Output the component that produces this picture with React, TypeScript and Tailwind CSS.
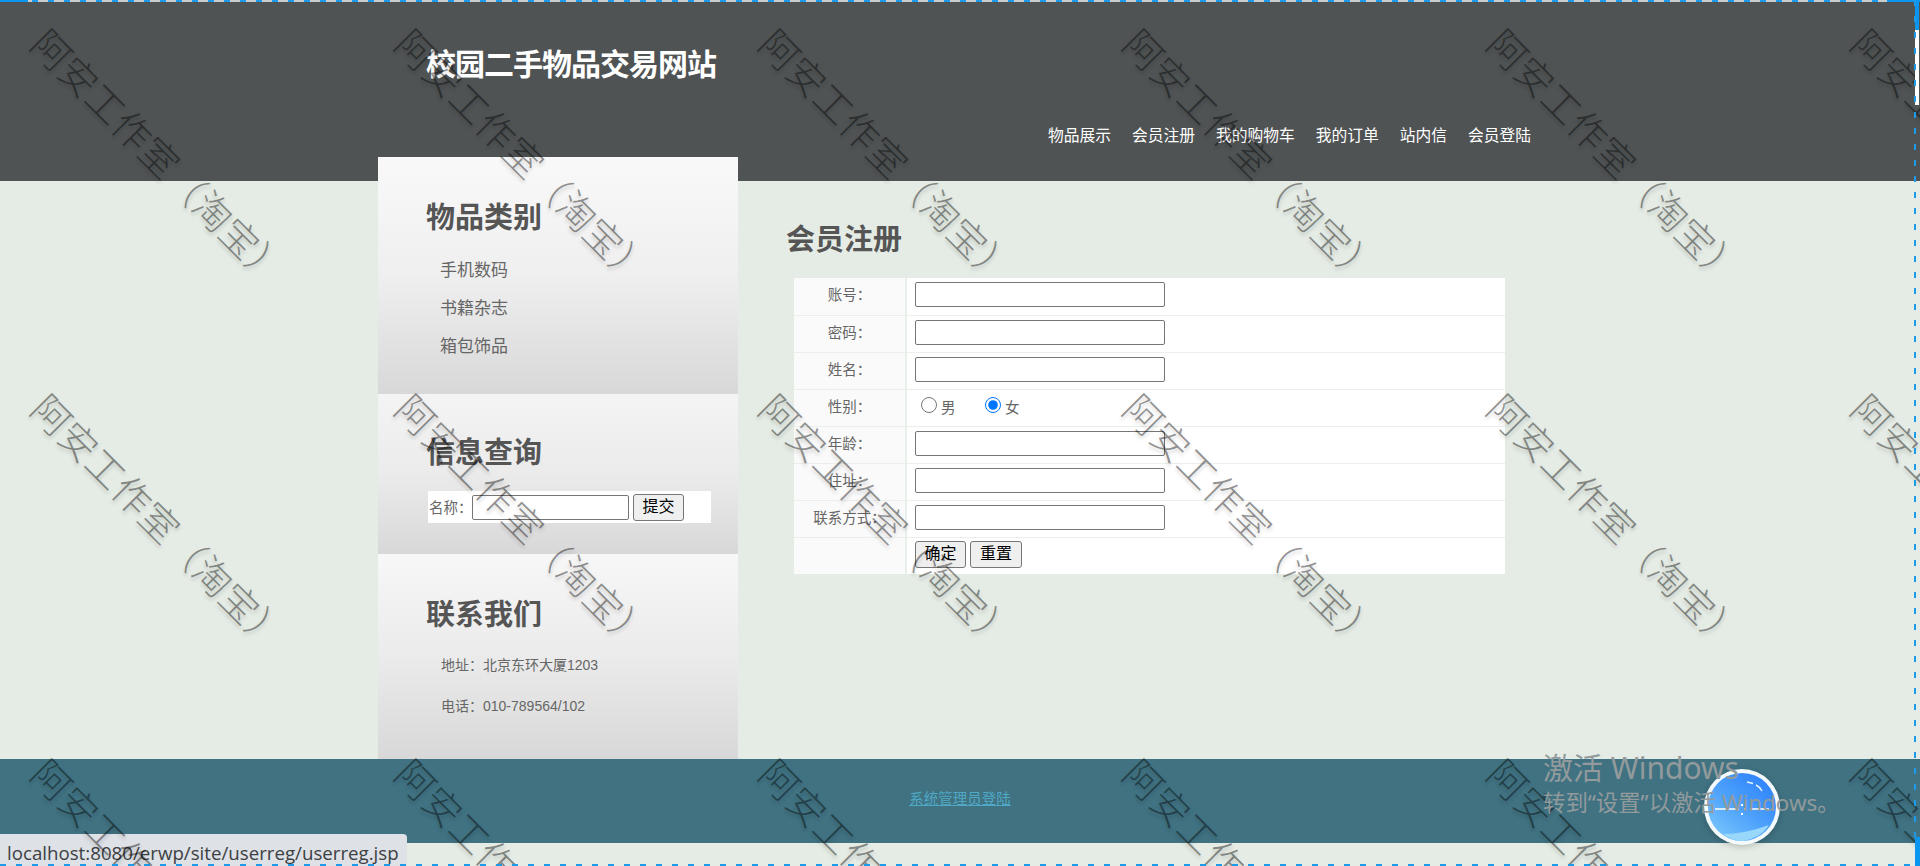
const cn = '"Liberation Sans", "Noto Sans CJK SC", sans-serif';

const navItems = ["物品展示", "会员注册", "我的购物车", "我的订单", "站内信", "会员登陆"];

const formRows = ["账号：", "密码：", "姓名：", "性别：", "年龄：", "住址：", "联系方式：", ""];

const marks = Array.from({ length: 18 }, (_, i) => i);

function TextInput({ className }: { className: string }) {
  return <input type="text" className={`h-[25px] border border-[#767676] rounded-[2px] bg-white ${className}`} />;
}

function NativeButton({ label, className }: { label: string; className: string }) {
  return (
    <button type="button" className={`h-[27px] border border-[#767676] rounded-[3px] bg-[#efefef] text-base leading-none text-black ${className}`}>
      {label}
    </button>
  );
}

function Ball() {
  return (
    <svg width="78" height="78" viewBox="0 0 78 78" className="absolute left-[1703px] top-[768px] drop-shadow-[0_2px_3px_rgba(0,0,0,0.2)]">
      <defs>
        <linearGradient id="ball" x1="0.85" y1="0.1" x2="0.2" y2="0.9">
          <stop offset="0" stopColor="#2f84fb" />
          <stop offset="0.55" stopColor="#4ea2fb" />
          <stop offset="1" stopColor="#71c0fc" />
        </linearGradient>
      </defs>
      <circle cx="39" cy="39" r="38" fill="#f4f9fc" />
      <circle cx="39" cy="39" r="34" fill="url(#ball)" />
      <path d="M20 66 Q42 66 66 57 Q58 70 39 73 Q28 72 20 66Z" fill="#9ad8fb" />
      <path d="M44 14 L50 15.5 M53 17 Q57 19 59 23" stroke="#e8f4ff" strokeWidth="1.4" fill="none" />
      <path d="M12 41 H36 M41 41 H43 M47 41 H66" stroke="#fff" strokeWidth="1.3" />
      <rect x="38" y="36" width="2" height="2" fill="#fff" />
      <rect x="38" y="45" width="2" height="2" fill="#fff" />
    </svg>
  );
}

export default function App() {
  return (
    <div className="relative h-[866px] w-full overflow-hidden bg-[#e5ece5]" style={{ fontFamily: cn }}>
      <header className="h-[181px] bg-[#4f5354] flex flex-col">
        <h1 className="pl-[426px] pt-[46px] text-[30px] leading-[38px] font-bold tracking-[-1px] text-white">校园二手物品交易网站</h1>
        <nav className="flex gap-[21px] pl-[1048px] mt-[42px] text-[15.75px] leading-5 text-white">
          {navItems.map((n) => (
            <a key={n}>{n}</a>
          ))}
        </nav>
      </header>

      <div className="flex h-[578px]">
        <aside className="ml-[378px] mt-[-24px] w-[360px] h-[602px] shrink-0 flex flex-col">
          <section className="h-[237px] pl-12 pt-[43px] bg-gradient-to-b from-[#f9f9f9] via-[#efefef] to-[#d8d8d8]">
            <h2 className="text-[29px] leading-9 font-bold text-[#555]">物品类别</h2>
            <ul className="mt-4 pl-[14px] text-[17px] text-[#666]">
              <li className="h-[38px] leading-[38px]">手机数码</li>
              <li className="h-[38px] leading-[38px]">书籍杂志</li>
              <li className="h-[38px] leading-[38px]">箱包饰品</li>
            </ul>
          </section>
          <section className="h-[160px] pl-12 pt-[41px] bg-gradient-to-b from-[#f4f4f4] via-[#ebebeb] to-[#d8d8d8]">
            <h2 className="text-[29px] leading-9 font-bold text-[#555]">信息查询</h2>
            <form className="mt-5 ml-[2px] w-[283px] h-8 bg-white flex items-center text-[14.5px] text-[#666]">
              <span className="ml-[1px] w-[43px] shrink-0 mt-1 whitespace-nowrap">名称：</span>
              <TextInput className="w-[157px]" />
              <NativeButton label="提交" className="ml-1 w-[51px]" />
            </form>
          </section>
          <section className="h-[205px] pl-12 pt-[43px] bg-gradient-to-b from-[#f7f7f7] via-[#ebebeb] to-[#d8d8d8]">
            <h2 className="text-[29px] leading-9 font-bold text-[#555]">联系我们</h2>
            <div className="pl-[15px] mt-3 text-[14px] text-[#666] leading-[41px]">
              <p>地址：北京东环大厦1203</p>
              <p>电话：010-789564/102</p>
            </div>
          </section>
        </aside>

        <main className="pl-12 pt-[41px] flex-1">
          <h2 className="text-[29px] leading-9 font-bold text-[#555]">会员注册</h2>
          <table className="ml-2 mt-5 w-[711px] table-fixed border-collapse text-[14.5px] text-[#666]">
            <tbody>
              {formRows.map((label, i) => (
                <tr key={i} className="h-[37px] border-b border-[#e9efe9] last:border-b-0">
                  <td className="w-[112px] align-top leading-[34px] bg-[#fafafa] border-r-2 border-[#e9efe9] text-center">{label}</td>
                  <td className="align-top bg-white pl-[8px] pt-1">
                    {i === 3 ? (
                      <div className="flex items-start pt-[3px] leading-none">
                        <input type="radio" name="sex" className="ml-[6px] w-4 h-4" />
                        <span className="ml-1 mt-[4px] w-[44px]">男</span>
                        <input type="radio" name="sex" defaultChecked className="w-4 h-4 accent-[#0075ff]" />
                        <span className="ml-1 mt-[4px]">女</span>
                      </div>
                    ) : i === 7 ? (
                      <div className="flex gap-1 mt-[-1px]">
                        <NativeButton label="确定" className="w-[51px]" />
                        <NativeButton label="重置" className="w-[52px]" />
                      </div>
                    ) : (
                      <TextInput className="block w-[250px]" />
                    )}
                  </td>
                </tr>
              ))}
            </tbody>
          </table>
        </main>
      </div>

      <footer className="h-[84px] bg-[#407282] flex items-center justify-center">
        <a className="text-[14.5px] mt-[-2px] underline text-[#4fa8c4]">系统管理员登陆</a>
      </footer>

      {/* browser status bubble */}
      <div className="absolute left-0 bottom-0 w-[407px] h-8 rounded-tr-[4px] bg-[#dee1e6] pl-[7px] text-[18.7px] leading-[38px] text-[#3c4043]" style={{ fontFamily: '"Open Sans", sans-serif' }}>
        localhost:8080/erwp/site/userreg/userreg.jsp
      </div>

      {/* watermark */}
      <div className="absolute inset-0 overflow-hidden pointer-events-none pl-[53px] pt-[22px] grid grid-cols-[repeat(6,364px)] auto-rows-[365px]">
        {marks.map((m) => (
          <div key={m} className="relative">
            <span
              className="absolute left-0 top-0 origin-top-left rotate-45 whitespace-nowrap text-[38px] leading-[38px] font-light text-[rgba(0,0,0,0.42)] [text-shadow:2px_2px_4px_rgba(0,0,0,0.16)]"
              style={{ fontFamily: '"Noto Sans CJK SC", sans-serif' }}
            >
              阿安工作室（淘宝）
            </span>
          </div>
        ))}
      </div>

      <Ball />

      {/* windows activation notice */}
      <div className="absolute left-[1543px] top-[748px] text-[#929a9c] pointer-events-none" style={{ fontFamily: '"Noto Sans", "Noto Sans CJK SC", sans-serif' }}>
        <p className="text-[30px] leading-10">激活 Windows</p>
        <p className="text-[22.4px] leading-[30px]">转到“设置”以激活 Windows。</p>
      </div>

      {/* capture-tool frame */}
      <div className="absolute left-0 top-0 w-full h-[2px] bg-[repeating-linear-gradient(90deg,#1e9be8_0_6px,#c9cccc_6px_16px)]" />
      <div className="absolute left-0 top-0 w-[28px] h-[2px] bg-[#0a96f0]" />
      <div className="absolute right-0 top-0 w-[33px] h-[2px] bg-[#0a96f0]" />
      <div className="absolute right-[1px] top-0 w-1 h-[30px] bg-[#0a96f0]" />
      <div className="absolute right-[1px] top-[30px] w-1 h-[75px] bg-white" />
      <div className="absolute left-[1914px] top-0 w-[2px] h-[837px] bg-[repeating-linear-gradient(180deg,#1e9be8_0_6px,transparent_6px_16px)]" />
      <div className="absolute right-0 bottom-0 w-[5px] h-[29px] bg-[#0a96f0]" />
      <div className="absolute left-0 bottom-0 w-full h-[2px] bg-[repeating-linear-gradient(90deg,#1e9be8_0_6px,transparent_6px_16px)]" />
    </div>
  );
}
